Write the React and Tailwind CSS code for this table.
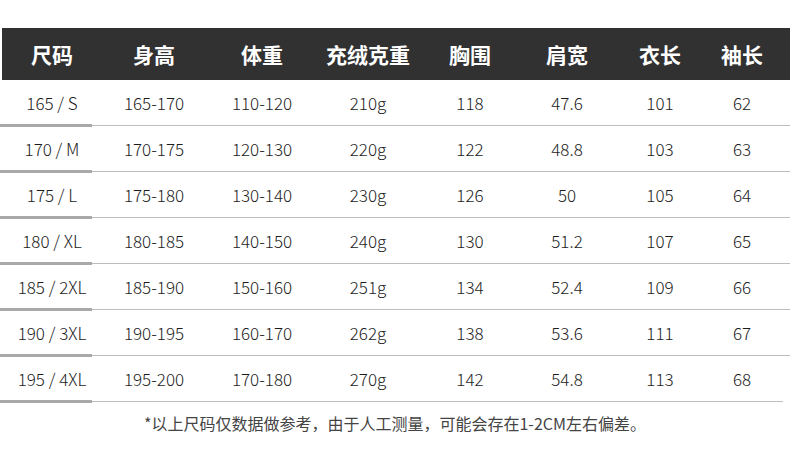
import React from "react";

const headers = ["尺码", "身高", "体重", "充绒克重", "胸围", "肩宽", "衣长", "袖长"];
const rows = [
  ["165 / S", "165-170", "110-120", "210g", "118", "47.6", "101", "62"],
  ["170 / M", "170-175", "120-130", "220g", "122", "48.8", "103", "63"],
  ["175 / L", "175-180", "130-140", "230g", "126", "50", "105", "64"],
  ["180 / XL", "180-185", "140-150", "240g", "130", "51.2", "107", "65"],
  ["185 / 2XL", "185-190", "150-160", "251g", "134", "52.4", "109", "66"],
  ["190 / 3XL", "190-195", "160-170", "262g", "138", "53.6", "111", "67"],
  ["195 / 4XL", "195-200", "170-180", "270g", "142", "54.8", "113", "68"],
];

const grid = "grid grid-cols-[104px_100px_116px_96px_108px_86px_100px_64px]";

export default function App() {
  return (
    <div
      className="w-[790px] h-[469px] bg-white overflow-hidden pt-[28px]"
      style={{ fontFamily: '"Noto Sans CJK SC", "Noto Sans", sans-serif' }}
    >
      <div className="ml-[2px] h-[52px] bg-[#313131]">
        <div className={`${grid} h-full -ml-[2px] items-center`}>
          {headers.map((h) => (
            <div key={h} className="text-center text-white font-bold text-[21px] leading-none">
              {h}
            </div>
          ))}
        </div>
      </div>
      {rows.map((r, i) => (
        <div key={i}>
          <div className={`${grid} h-[45px] items-center`}>
            {r.map((c, j) => (
              <div key={j} className="text-center text-[#1c1c1c] font-light text-[17px] leading-none">
                {c}
              </div>
            ))}
          </div>
          <div className={`flex items-start h-px ${i === rows.length - 1 ? "mr-[7px]" : ""}`}>
            <div className="w-[92px] h-[3px] -mt-px bg-[#a9a9a9]" />
            <div className="flex-1 h-px bg-[#bcbcbc]" />
          </div>
        </div>
      ))}
      <div className="mt-[13px] text-center text-[16px] text-[#444] leading-none">
        *以上尺码仅数据做参考，由于人工测量，可能会存在1-2CM左右偏差。
      </div>
    </div>
  );
}
